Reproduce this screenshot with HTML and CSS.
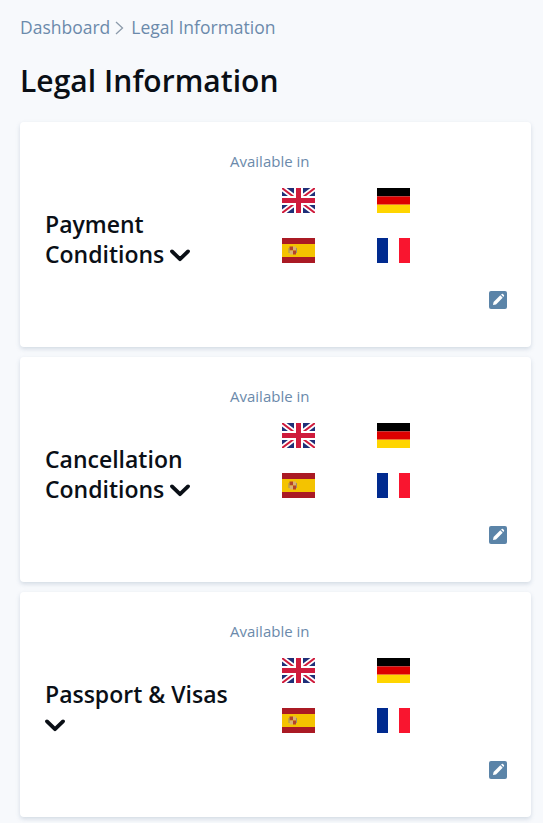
FILE: index.html
```html
<!DOCTYPE html>
<html lang="en">
<head>
  <meta charset="UTF-8" />
  <meta name="viewport" content="width=device-width, initial-scale=1.0"/>
  <title>Legal Information</title>
  <link rel="stylesheet" href="styles.css">
</head>
<body>
  <svg class="defs" width="0" height="0">
    <defs>
      <symbol id="flag-uk" viewBox="0 0 33 25">
        <rect width="33" height="25" fill="#1f2f78"/>
        <path d="M0 0L33 25M33 0L0 25" stroke="#fff" stroke-width="5.5"/>
        <path d="M0 0L33 25M33 0L0 25" stroke="#cf1b3c" stroke-width="2"/>
        <path d="M16.5 0V25M0 12.5H33" stroke="#fff" stroke-width="9"/>
        <path d="M16.5 0V25M0 12.5H33" stroke="#cf1b3c" stroke-width="5"/>
      </symbol>
      <symbol id="flag-de" viewBox="0 0 33 25">
        <rect width="33" height="8.4" fill="#000"/>
        <rect y="8.4" width="33" height="8.3" fill="#dd0000"/>
        <rect y="16.7" width="33" height="8.3" fill="#ffd500"/>
      </symbol>
      <symbol id="flag-es" viewBox="0 0 33 25">
        <rect width="33" height="25" fill="#aa1a24"/>
        <rect y="6" width="33" height="13" fill="#f4c300"/>
        <rect x="7.5" y="8.5" width="3.5" height="4" fill="#b5432a"/>
        <rect x="11" y="8.5" width="3" height="4" fill="#d9b070"/>
        <rect x="7.5" y="12.5" width="3.5" height="4" fill="#d9b070"/>
        <rect x="11" y="12.5" width="3" height="4" fill="#b5432a"/>
        <rect x="6.5" y="10" width="1" height="5" fill="#a08a70"/>
        <rect x="14" y="10" width="1" height="5" fill="#a08a70"/>
      </symbol>
      <symbol id="flag-fr" viewBox="0 0 33 25">
        <rect width="11" height="25" fill="#002a8f"/>
        <rect x="11" width="11" height="25" fill="#fff"/>
        <rect x="22" width="11" height="25" fill="#f9152f"/>
      </symbol>
      <symbol id="chevron" viewBox="0 0 20 13">
        <path d="M2 2.4L10 10.2L18 2.4" fill="none" stroke="#0a0f16" stroke-width="3.8" stroke-linecap="round" stroke-linejoin="round"/>
      </symbol>
      <symbol id="edit" viewBox="0 0 18 18">
        <rect width="18" height="18" rx="2" fill="#5b84a8"/>
        <path d="M4 14L4.6 11L11.3 4.3L13.7 6.7L7 13.4Z" fill="#fff"/>
        <path d="M12 3.6L12.9 2.9C13.2 2.7 13.5 2.7 13.8 2.9L15 4.1C15.2 4.4 15.2 4.7 15 5L14.4 5.9Z" fill="#fff"/>
      </symbol>
    </defs>
  </svg>

  <div class="page">
    <div class="breadcrumb">
      <span>Dashboard</span>
      <svg class="crumb-sep" width="9" height="14" viewBox="0 0 9 14"><path d="M1 1L7.5 7L1 13" fill="none" stroke="#8c9bab" stroke-width="1.3"/></svg>
      <span>Legal Information</span>
    </div>

    <h1 class="page-title">Legal Information</h1>

    <div class="card">
      <div class="card-title">Payment Conditions <svg class="chevron"><use href="#chevron"/></svg></div>
      <div class="card-side">
        <div class="available">Available in</div>
        <div class="flags">
          <svg class="flag"><use href="#flag-uk"/></svg>
          <svg class="flag"><use href="#flag-de"/></svg>
          <svg class="flag"><use href="#flag-es"/></svg>
          <svg class="flag"><use href="#flag-fr"/></svg>
        </div>
        <svg class="edit"><use href="#edit"/></svg>
      </div>
    </div>

    <div class="card">
      <div class="card-title">Cancellation Conditions <svg class="chevron"><use href="#chevron"/></svg></div>
      <div class="card-side">
        <div class="available">Available in</div>
        <div class="flags">
          <svg class="flag"><use href="#flag-uk"/></svg>
          <svg class="flag"><use href="#flag-de"/></svg>
          <svg class="flag"><use href="#flag-es"/></svg>
          <svg class="flag"><use href="#flag-fr"/></svg>
        </div>
        <svg class="edit"><use href="#edit"/></svg>
      </div>
    </div>

    <div class="card">
      <div class="card-title">Passport &amp; Visas <svg class="chevron"><use href="#chevron"/></svg></div>
      <div class="card-side">
        <div class="available">Available in</div>
        <div class="flags">
          <svg class="flag"><use href="#flag-uk"/></svg>
          <svg class="flag"><use href="#flag-de"/></svg>
          <svg class="flag"><use href="#flag-es"/></svg>
          <svg class="flag"><use href="#flag-fr"/></svg>
        </div>
        <svg class="edit"><use href="#edit"/></svg>
      </div>
    </div>
  </div>
</body>
</html>
```

FILE: styles.css
```css
* { box-sizing: border-box; }
html, body { height: 100%; }
body {
  margin: 0;
  background: #f7f9fc;
  font-family: 'Open Sans', 'Noto Sans', sans-serif;
  color: #0a0f16;
  overflow: hidden;
}
.defs { position: absolute; }
.page {
  padding: 14px 12px 0 20px;
}
.breadcrumb {
  display: flex;
  align-items: center;
  height: 26px;
  font-size: 17.5px;
  color: #6b8aab;
}
.crumb-sep {
  margin: 1px 7px 0 5px;
}
.page-title {
  margin: 19px 0 0;
  height: 44px;
  line-height: 44px;
  font-size: 30px;
  font-weight: 600;
  letter-spacing: 0.05px;
}
.card {
  display: flex;
  height: 225px;
  margin-top: 19px;
  margin-bottom: -9px;
  padding: 0 24px 0 25px;
  background: #fff;
  border-radius: 4px;
  box-shadow: 0 2px 4px rgba(120, 140, 165, 0.28);
}
.card-title {
  align-self: center;
  width: 185px;
  margin-top: 9px;
  font-size: 23px;
  font-weight: 600;
  line-height: 30px;
}
.chevron {
  width: 20px;
  height: 13px;
  vertical-align: 1px;
}
.card-side {
  flex: 1;
  display: flex;
  flex-direction: column;
  padding-top: 28px;
}
.available {
  height: 22px;
  line-height: 22px;
  font-size: 15px;
  color: #6b8aab;
}
.flags {
  display: grid;
  grid-template-columns: 95px 95px;
  grid-auto-rows: 25px;
  row-gap: 25px;
  margin: 16px 0 0 52px;
  width: 190px;
}
.flag {
  display: block;
  width: 33px;
  height: 25px;
}
.edit {
  width: 18px;
  height: 18px;
  margin-top: 28px;
  align-self: flex-end;
}
```
